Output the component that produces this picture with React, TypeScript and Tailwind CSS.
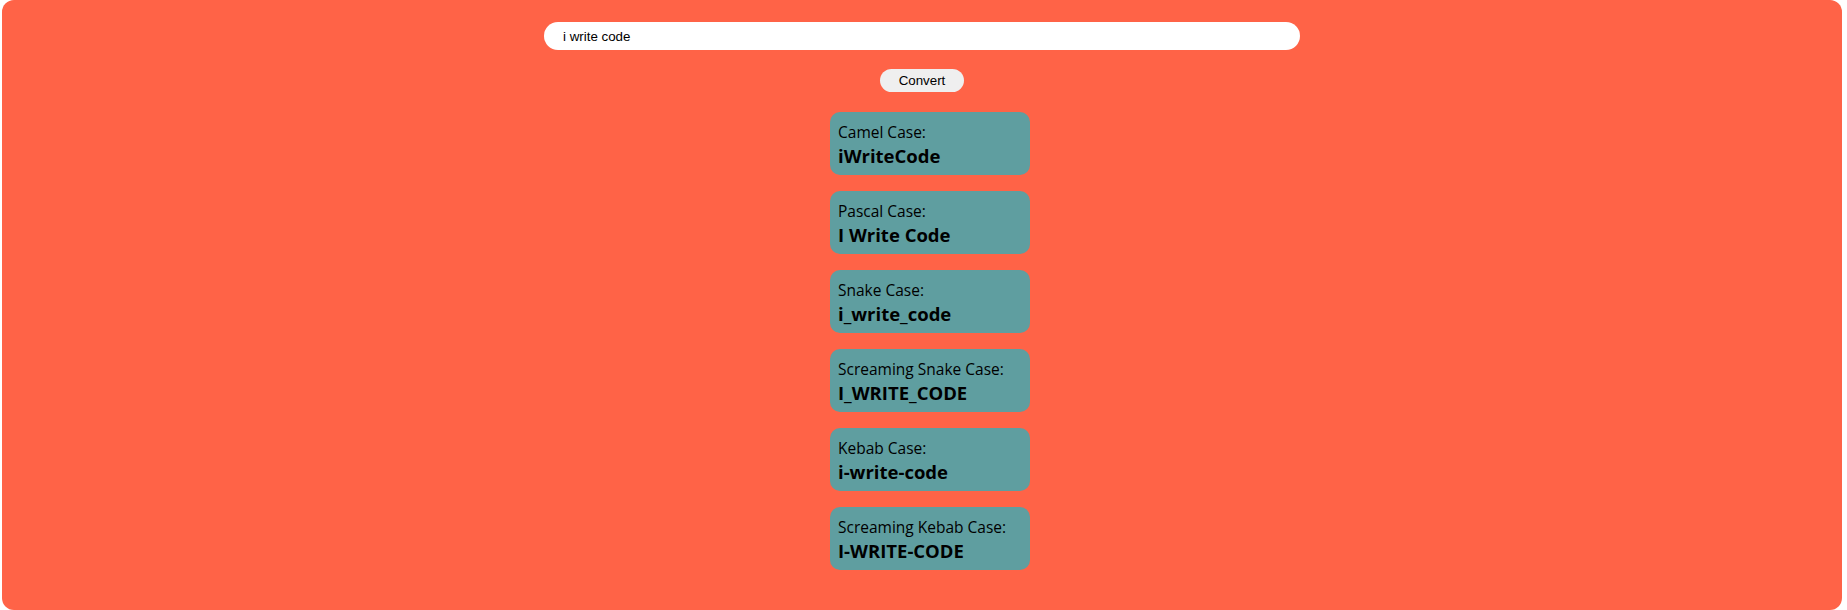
import { useState } from "react";

const toWords = (s: string) => s.trim().split(/\s+/).filter(Boolean);

const cap = (w: string) => w.charAt(0).toUpperCase() + w.slice(1).toLowerCase();

const converters: { label: string; fn: (w: string[]) => string }[] = [
  { label: "Camel Case:", fn: (w) => w.map((x, i) => (i === 0 ? x.toLowerCase() : cap(x))).join("") },
  { label: "Pascal Case:", fn: (w) => w.map(cap).join(" ") },
  { label: "Snake Case:", fn: (w) => w.map((x) => x.toLowerCase()).join("_") },
  { label: "Screaming Snake Case:", fn: (w) => w.map((x) => x.toUpperCase()).join("_") },
  { label: "Kebab Case:", fn: (w) => w.map((x) => x.toLowerCase()).join("-") },
  { label: "Screaming Kebab Case:", fn: (w) => w.map((x) => x.toUpperCase()).join("-") },
];

export default function App() {
  const [text, setText] = useState("i write code");
  const [words, setWords] = useState(toWords("i write code"));

  return (
    <div className="bg-white h-[610px] pl-[2px] pr-[5px]">
      <div className="bg-[#ff6347] h-[610px] rounded-[12px] flex flex-col items-center pt-[22px]">
        <input
          value={text}
          onChange={(e) => setText(e.target.value)}
          className="w-[756px] h-[28px] bg-white rounded-full px-[19px] text-[13.33px] text-black outline-none font-['Liberation_Sans',Arial,sans-serif]"
        />
        <button
          onClick={() => setWords(toWords(text))}
          className="mt-[19px] w-[84px] h-[23px] bg-[#efefef] rounded-full text-[13.33px] text-black font-['Liberation_Sans',Arial,sans-serif]"
        >
          Convert
        </button>
        <div className="mt-[20px] ml-[16px] flex flex-col gap-[16px]">
          {converters.map((c) => (
            <div
              key={c.label}
              className="w-[200px] h-[63px] bg-[#5f9ea0] rounded-[10px] px-[8px] pt-[9px] text-black font-['Open_Sans','Noto_Sans',sans-serif]"
            >
              <div className="text-[15.5px] leading-[22px]">{c.label}</div>
              <div className="text-[18.5px] leading-[26px] font-bold">{c.fn(words)}</div>
            </div>
          ))}
        </div>
      </div>
    </div>
  );
}
